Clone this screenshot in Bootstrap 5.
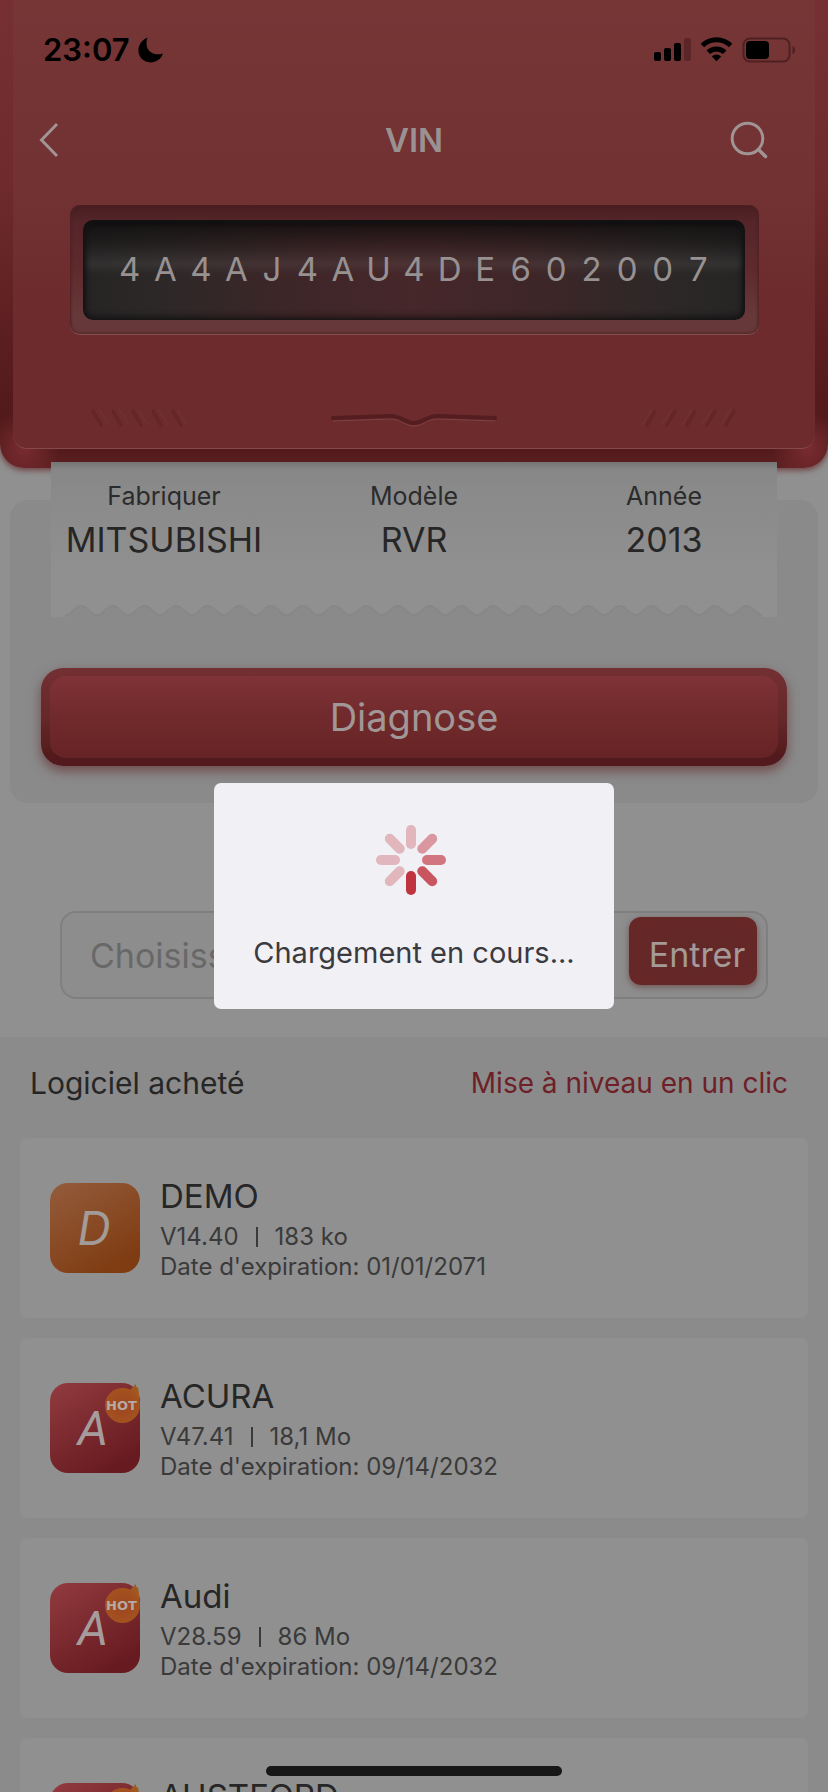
<!DOCTYPE html>
<html lang="fr">
<head>
<meta charset="utf-8">
<meta name="viewport" content="width=device-width, initial-scale=1">
<title>VIN</title>
<link href="https://cdn.jsdelivr.net/npm/bootstrap@5.3.0/dist/css/bootstrap.min.css" rel="stylesheet">
<style>
  body { font-family: Inter, "Liberation Sans", sans-serif; background: #909090; color: #262626; height: 100vh; overflow: hidden; }

  /* Red device housing */
  .housing { background:
      radial-gradient(circle at 24px calc(100% - 20px), #7a2c30 0, transparent 36px),
      radial-gradient(circle at calc(100% - 20px) calc(100% - 20px), #7a2c30 0, transparent 36px),
      linear-gradient(#763034 0%, #6e2a2c 40%, #541a1c 85%, #521a1c 96%, #5e2022 100%);
    border-radius: 0 0 24px 24px; padding: 0 13px 19px; box-shadow: 0 2px 6px #6b3a3c; }
  .faceplate { background: linear-gradient(#763636 0%, #723132 42%, #6d2b2d 68%, #6d2b2d 100%);
    border-bottom: 1px solid #854a4b; border-radius: 0 0 14px 14px; padding-bottom: 18px; }
  .statusbar { height: 98px; padding: 2px 20px 0 30px; color: #000; }
  .clock { font-size: 31px; font-weight: 600; line-height: 40px; }
  .titlebar { display: grid; grid-template-columns: 1fr auto 1fr; height: 84px; padding: 0 24px; }
  .titlebar h1 { font-size: 33px; font-weight: 600; line-height: 40px; color: #9a9292; }
  .icon-btn { background: none; border: 0; padding: 0; line-height: 0; }
  .search-btn { margin-right: 23px; }
  .bezel { margin: 23px 56px 0 57px; padding: 15px 14px 14px 13px; border-radius: 10px;
    background: linear-gradient(#481f21 0%, #55252a 14%, #5f2a2c 50%, #673839 85%, #673839 100%);
    border-bottom: 1px solid #855052; box-shadow: inset 1px 0 3px #4e2224, inset -1px 0 3px #4e2224; }
  .vin-screen { height: 100px; padding: 0 29px 2px; border-radius: 10px;
    background: linear-gradient(rgba(14,12,12,.85) 0%, rgba(14,12,12,.3) 24%, rgba(120,120,120,.14) 44%, rgba(0,0,0,0) 54%, rgba(0,0,0,0) 88%, rgba(0,0,0,.2) 100%),
      linear-gradient(90deg, #262424 0%, #2d2828 12%, #3e2628 32%, #46272a 50%, #3e2628 68%, #2d2828 88%, #262424 100%);
    box-shadow: inset 0 2px 5px #111, inset 3px 0 5px #181616, inset -3px 0 5px #181616; }
  .vin-screen span { flex: 1 1 0; text-align: center; font-size: 33px; line-height: 40px; color: #979191; }
  .grooves { margin-top: 71px; padding: 0 76px; height: 24px; }

  /* Result panel with the printed slip */
  .panel { margin: 32px 10px 0; padding: 0 31px 37px; background: #8a8a8a; border-radius: 18px; }
  .slip { position: relative; margin: -38px 10px 0; height: 155px; padding-top: 14px;
    background: linear-gradient(#757575 0, #878787 8px, #8a8a8a 30px, #909090 110px); }
  .slip dt { font-size: 25px; font-weight: 400; line-height: 40px; color: #2b2b2b; }
  .slip dd { font-size: 34px; line-height: 48px; margin: 0; }
  .torn { position: absolute; left: 0; bottom: 0; width: 100%; height: 12px; }
  .btn-diagnose { margin-top: 51px; height: 98px; padding: 8px 9px; border: 0; border-radius: 22px;
    background: linear-gradient(#733032, #67282a 50%, #521a1c 90%); box-shadow: 0 5px 12px #6f4a4c; }
  .btn-diagnose span { display: flex; align-items: center; justify-content: center; height: 100%; border-radius: 16px;
    background: linear-gradient(#7f3336, #722b2d 45%, #662325); font-size: 38px; color: #a09796; }

  /* Code entry */
  .entry { margin: 108px 60px 38px; height: 88px; padding: 4px 9px 10px 28px; border: 2px solid #7f7f7f; border-radius: 16px; background: #8d8d8d; }
  .entry input { min-width: 0; background: transparent; border: 0; padding: 6px 0 0; font-size: 34px; outline: 0; }
  .entry input::placeholder { color: #686868; opacity: 1; }
  .btn-enter { flex: 0 0 128px; height: 68px; padding: 8px 0 0 8px; border: 0; border-radius: 12px; background: radial-gradient(#612827, #682727);
    box-shadow: 0 2px 6px #6f5253; color: #a39a99; font-size: 34px; line-height: 40px; }

  /* Purchased software */
  .software { background: #8b8b8b; }
  .software-head { height: 92px; padding: 0 40px 0 30px; margin-bottom: 9px; }
  .software-head h2 { font-size: 30px; font-weight: 400; line-height: 40px; }
  .software-head a { font-size: 28px; line-height: 40px; color: #6e1f27; }
  .software-list { gap: 20px; padding: 0 20px; }
  .software-item { flex: 0 0 180px; padding: 0 30px; gap: 20px; background: #909090; border-radius: 8px; }
  .app-icon { width: 90px; height: 90px; flex: none; }
  .app-name { font-size: 33px; font-weight: 400; line-height: 42px; margin-bottom: 5px; }
  .app-meta { font-size: 24px; line-height: 30px; color: #3a3a3a; }
  .app-meta .bar { width: 2px; height: 20px; margin: 0 17px; background: #3a3a3a; }
  .home-bar { position: fixed; left: 50%; bottom: 16px; width: 296px; height: 10px; margin-left: -148px; border-radius: 5px; background: #171717; }

  .modal-dialog.loader { width: 400px; max-width: 90%; margin: 0 auto; min-height: 100%; }
  .loader .modal-content { height: 226px; background: #f1f0f5; border: 0; border-radius: 7px; padding-top: 42px; color: #3a3a3f; }
  .loader svg { margin-right: 6px; }
  .loader p { font-size: 29px; line-height: 40px; margin: 38px 0 0; }
</style>
</head>
<body class="d-flex flex-column">

<header class="housing flex-shrink-0">
  <div class="faceplate">
    <div class="statusbar d-flex justify-content-between align-items-center">
      <div class="d-flex align-items-center gap-2">
        <span class="clock">23:07</span>
        <svg width="26" height="26" viewBox="0 0 26 26" aria-hidden="true"><path d="M9.6 .6C3.800 3 .4 8 .4 13.600C.4 20.300 5.800 25.400 12.500 25.400C18.200 25.400 23.300 22 25 16.200C23.200 17.200 21.200 17.500 19 17.300C12.800 16.900 8.500 12.600 8.500 6.500C8.500 4.300 8.800 2.400 9.600 .6Z"/></svg>
      </div>
      <svg width="141" height="26" viewBox="0 0 141 26" aria-hidden="true">
        <rect x="0" y="15" width="7" height="9" rx="2"/><rect x="10" y="11" width="7" height="13" rx="2"/><rect x="20" y="6" width="7" height="18" rx="2"/>
        <rect x="30" y="1" width="7" height="23" rx="2" fill="#5c2628"/>
        <path d="M62.500 24.200L57.800 19.500A6.700 6.700 0 0 1 67.200 19.500Z"/>
        <path d="M54.300 15.300A11.600 11.600 0 0 1 70.700 15.300" fill="none" stroke="#000" stroke-width="5"/>
        <path d="M48.400 8.600A20 20 0 0 1 76.600 8.600" fill="none" stroke="#000" stroke-width="5"/>
        <rect x="89.500" y="1.500" width="46" height="23" rx="6.500" fill="none" stroke="#4e2022" stroke-width="2"/>
        <rect x="92" y="4" width="23" height="18" rx="4"/>
        <path d="M138.500 9C142 10 142 16 138.500 17Z" fill="#4e2022"/>
      </svg>
    </div>
    <nav class="titlebar align-items-center" aria-label="VIN">
      <button class="icon-btn text-start" type="button" aria-label="Retour"><svg width="24" height="36" viewBox="0 0 24 36"><path d="M20 2L4.500 18L20 34" fill="none" stroke="#a09494" stroke-width="3"/></svg></button>
      <h1 class="m-0">VIN</h1>
      <button class="icon-btn search-btn text-end" type="button" aria-label="Rechercher"><svg width="38" height="38" viewBox="0 0 38 38"><circle cx="17.500" cy="17.500" r="15.300" fill="none" stroke="#a09494" stroke-width="3"/><path d="M28.500 28.500L35.500 35.500" stroke="#a09494" stroke-width="3.500" stroke-linecap="round"/></svg></button>
    </nav>
    <div class="bezel">
      <div class="vin-screen d-flex align-items-center">
        <span>4</span><span>A</span><span>4</span><span>A</span><span>J</span><span>4</span><span>A</span><span>U</span><span>4</span><span>D</span><span>E</span><span>6</span><span>0</span><span>2</span><span>0</span><span>0</span><span>7</span>
      </div>
    </div>
    <div class="grooves d-flex justify-content-between align-items-center">
      <svg width="98" height="24" viewBox="0 0 98 24" aria-hidden="true"><g stroke="#743436" stroke-width="1"><path d="M10 3L20 19M30 3L40 19M49 3L59 19M69 3L79 19M88 3L98 19"/></g><g stroke="#652528" stroke-width="3.500" stroke-linecap="round"><path d="M4 5L12 19M24 5L32 19M44 5L52 19M64 5L72 19M84 5L92 19"/></g></svg>
      <svg width="166" height="24" viewBox="0 0 166 24" fill="none" aria-hidden="true"><path d="M2 14L60 12C70 12 74 19 83 19S96 12 106 12L164 14" transform="translate(0 1)" stroke="#7d4244"/><path d="M2 12L60 10C70 10 74 17 83 17S96 10 106 10L164 12" stroke="#541d20" stroke-width="4" stroke-linecap="round"/></svg>
      <svg width="98" height="24" viewBox="0 0 98 24" aria-hidden="true"><g stroke="#743436" stroke-width="1"><path d="M11 3L1 19M31 3L21 19M51 3L41 19M71 3L61 19M90 3L80 19"/></g><g stroke="#652528" stroke-width="3.500" stroke-linecap="round"><path d="M14 5L6 19M34 5L26 19M54 5L46 19M74 5L66 19M93 5L85 19"/></g></svg>
    </div>
  </div>
</header>

<section class="panel flex-shrink-0">
  <div class="slip">
    <dl class="row flex-nowrap text-center mb-0">
      <div class="col-4"><dt>Fabriquer</dt><dd>MITSUBISHI</dd></div>
      <div class="col-4"><dt>Modèle</dt><dd>RVR</dd></div>
      <div class="col-4"><dt>Année</dt><dd>2013</dd></div>
    </dl>
    <svg class="torn" aria-hidden="true">
      <defs><pattern id="wave" x="0" y="0" width="31.7" height="12" patternUnits="userSpaceOnUse"><path d="M0 12V10C8 10 8 1 15.850 1S24 10 31.700 10V12Z" fill="#8a8a8a"/><path d="M0 10C8 10 8 1 15.850 1S24 10 31.700 10" fill="none" stroke="#878787" stroke-width="2"/></pattern></defs>
      <svg x="14" width="96%" height="12"><rect width="100%" height="12" fill="url(#wave)"/></svg>
    </svg>
  </div>
  <button class="btn-diagnose d-block w-100" type="button"><span>Diagnose</span></button>
</section>

<form class="entry flex-shrink-0 d-flex">
  <input class="flex-grow-1" type="text" placeholder="Choisissez" aria-label="Choisissez">
  <button class="btn-enter" type="button">Entrer</button>
</form>

<section class="software flex-shrink-0">
  <div class="software-head d-flex justify-content-between align-items-center">
    <h2 class="m-0">Logiciel acheté</h2>
    <a class="text-decoration-none" href="#">Mise à niveau en un clic</a>
  </div>
  <div class="software-list d-flex flex-column">
    <article class="software-item d-flex align-items-center">
      <svg class="app-icon" viewBox="0 0 90 90" aria-hidden="true">
        <defs>
          <linearGradient id="orange" x1="0" y1="0" x2=".6" y2="1"><stop stop-color="#945c3c"/><stop offset="1" stop-color="#7f3c12"/></linearGradient>
          <linearGradient id="crimson" x1="0" y1="0" x2=".6" y2="1"><stop stop-color="#923b40"/><stop offset="1" stop-color="#671b20"/></linearGradient>
          <radialGradient id="ember"><stop stop-color="#9c4420"/><stop offset="1" stop-color="#a4521f"/></radialGradient>
          <g id="hot"><path d="M80 7L84 3L85.500 1L87 5L88 4L89 10V20A17.500 17.500 0 0 1 88 28.500L72 22Z" fill="#9f5a20"/><circle cx="72.500" cy="22.500" r="17.500" fill="url(#ember)"/><text x="71.500" y="27" text-anchor="middle" font-family="DejaVu Sans" font-weight="700" font-size="13" fill="#b5aaa4">HOT</text></g>
        </defs>
        <rect width="90" height="90" rx="18" fill="url(#orange)"/><text x="44" y="62" text-anchor="middle" font-family="Inter" font-style="italic" font-size="46" fill="#a29b97">D</text>
      </svg>
      <div>
        <h3 class="app-name">DEMO</h3>
        <div class="app-meta d-flex align-items-center">V14.40<span class="bar"></span>183 ko</div>
        <div class="app-meta">Date d'expiration: 01/01/2071</div>
      </div>
    </article>
    <article class="software-item d-flex align-items-center">
      <svg class="app-icon" viewBox="0 0 90 90" aria-hidden="true"><rect width="90" height="90" rx="18" fill="url(#crimson)"/><text x="43" y="62" text-anchor="middle" font-family="Roboto" font-style="italic" font-size="48" fill="#a69c9d">A</text><use href="#hot"/></svg>
      <div>
        <h3 class="app-name">ACURA</h3>
        <div class="app-meta d-flex align-items-center">V47.41<span class="bar"></span>18,1 Mo</div>
        <div class="app-meta">Date d'expiration: 09/14/2032</div>
      </div>
    </article>
    <article class="software-item d-flex align-items-center">
      <svg class="app-icon" viewBox="0 0 90 90" aria-hidden="true"><rect width="90" height="90" rx="18" fill="url(#crimson)"/><text x="43" y="62" text-anchor="middle" font-family="Roboto" font-style="italic" font-size="48" fill="#a69c9d">A</text><use href="#hot"/></svg>
      <div>
        <h3 class="app-name">Audi</h3>
        <div class="app-meta d-flex align-items-center">V28.59<span class="bar"></span>86 Mo</div>
        <div class="app-meta">Date d'expiration: 09/14/2032</div>
      </div>
    </article>
    <article class="software-item d-flex align-items-center">
      <svg class="app-icon" viewBox="0 0 90 90" aria-hidden="true"><rect width="90" height="90" rx="18" fill="url(#crimson)"/><use href="#hot"/></svg>
      <div>
        <h3 class="app-name">AUSTFORD</h3>
        <div class="app-meta">&nbsp;</div>
        <div class="app-meta">&nbsp;</div>
      </div>
    </article>
  </div>
</section>

<div class="home-bar"></div>

<div class="modal show d-block" role="dialog" aria-label="Chargement en cours">
  <div class="modal-dialog modal-dialog-centered loader">
    <div class="modal-content align-items-center" role="status">
      <svg width="70" height="70" viewBox="-35 -35 70 70" stroke-width="10" stroke-linecap="round" aria-hidden="true">
        <g stroke="#e1b6bd"><path d="M0-30V-16"/><path d="M-30 0H-16"/><path d="M-21.200-21.200L-11.300-11.300"/><path d="M-21.200 21.200L-11.300 11.300"/></g>
        <path d="M21.200-21.200L11.300-11.300" stroke="#db979f"/><path d="M30 0H16" stroke="#d1767f"/><path d="M21.200 21.200L11.300 11.300" stroke="#c95560"/><path d="M0 30V16" stroke="#c0343f"/>
      </svg>
      <p>Chargement en cours...</p>
    </div>
  </div>
</div>

<script src="https://cdn.jsdelivr.net/npm/bootstrap@5.3.0/dist/js/bootstrap.bundle.min.js"></script>
</body>
</html>
